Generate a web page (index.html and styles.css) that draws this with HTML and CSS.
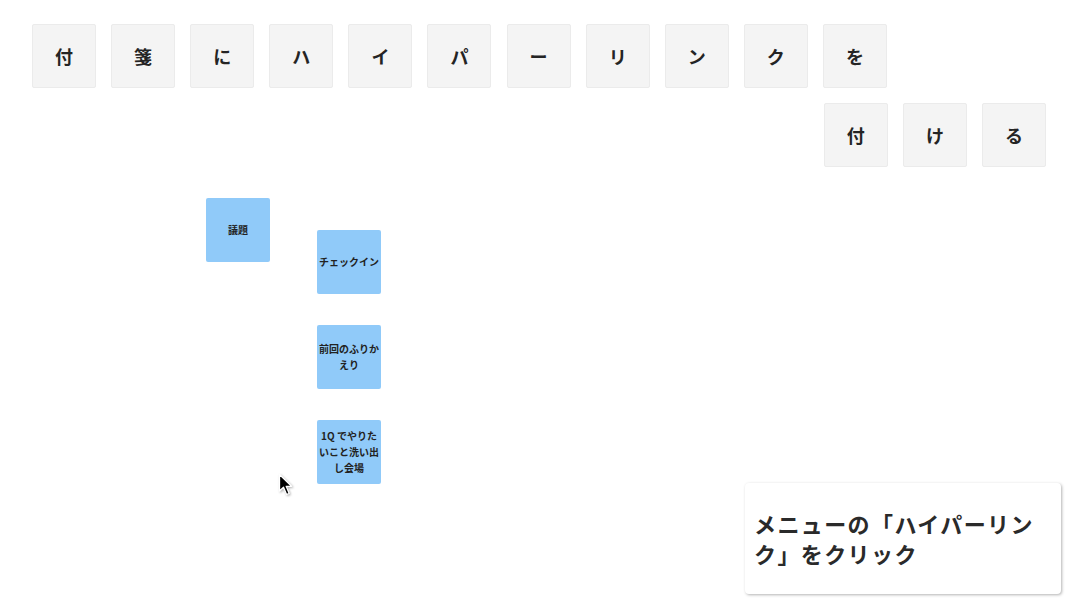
FILE: index.html
```html
<!DOCTYPE html>
<html lang="ja">
<head>
<meta charset="utf-8">
<link rel="stylesheet" href="styles.css">
</head>
<body>
<div class="title">
  <div class="row">
    <div class="tile">付</div>
    <div class="tile">箋</div>
    <div class="tile">に</div>
    <div class="tile">ハ</div>
    <div class="tile">イ</div>
    <div class="tile">パ</div>
    <div class="tile">ー</div>
    <div class="tile">リ</div>
    <div class="tile">ン</div>
    <div class="tile">ク</div>
    <div class="tile">を</div>
  </div>
  <div class="row row-end">
    <div class="tile">付</div>
    <div class="tile">け</div>
    <div class="tile">る</div>
  </div>
</div>
<div class="canvas">
  <div class="sticky s1">議題</div>
  <div class="sticky s2">チェックイン</div>
  <div class="sticky s3">前回のふりかえり</div>
  <div class="sticky s4">1Q でやりたいこと洗い出し会場</div>
  <svg class="cursor" width="16" height="24" viewBox="0 0 16 24">
    <path d="M1.5 1.5 L1.5 18 L5.5 14.2 L8.6 21.5 L11.2 20.4 L8.2 13.3 L13.6 13.3 Z" fill="#000" stroke="#fff" stroke-width="1.3" stroke-linejoin="round"/>
  </svg>
</div>
<div class="callout">メニューの「ハイパーリンク」をクリック</div>
</body>
</html>
```
FILE: styles.css
```css
html, body {
  margin: 0;
  padding: 0;
  background: #fff;
}
body {
  width: 1080px;
  height: 608px;
  position: relative;
  overflow: hidden;
  font-family: "Noto Sans CJK JP", "Noto Sans", sans-serif;
  color: #222;
}
.title {
  padding: 24px 34px 0 32px;
  display: flex;
  flex-direction: column;
  gap: 15px;
}
.row {
  display: flex;
  gap: 15.1px;
}
.row-end {
  justify-content: flex-end;
}
.tile {
  width: 64px;
  height: 64px;
  box-sizing: border-box;
  background: #f4f4f4;
  border: 1px solid #ebebeb;
  border-radius: 2px;
  display: flex;
  align-items: center;
  justify-content: center;
  font-size: 18px;
  font-weight: 700;
  color: #242424;
}
.canvas {
  position: absolute;
  left: 0;
  top: 0;
  width: 1080px;
  height: 608px;
}
.sticky {
  position: absolute;
  width: 64px;
  height: 64px;
  box-sizing: border-box;
  background: #90caf9;
  border-radius: 2px;
  display: flex;
  align-items: center;
  justify-content: center;
  text-align: center;
  padding: 0 2px;
  font-size: 10px;
  line-height: 16px;
  font-weight: 700;
  color: #222;
}
.s1 { left: 206px; top: 198px; }
.s2 { left: 317px; top: 230px; }
.s3 { left: 317px; top: 325px; }
.s4 { left: 317px; top: 420px; }
.cursor {
  position: absolute;
  left: 278px;
  top: 473px;
  filter: drop-shadow(1px 1px 1px rgba(0,0,0,0.3));
}
.callout {
  position: absolute;
  left: 745px;
  top: 483px;
  width: 316px;
  height: 111px;
  box-sizing: border-box;
  background: #fff;
  border-radius: 4px;
  box-shadow: 1px 1px 3px rgba(0,0,0,0.3);
  padding: 25px 10px 0 9px;
  font-size: 22px;
  line-height: 30px;
  letter-spacing: 1.4px;
  font-weight: 700;
  color: #2a2a2a;
}
```
